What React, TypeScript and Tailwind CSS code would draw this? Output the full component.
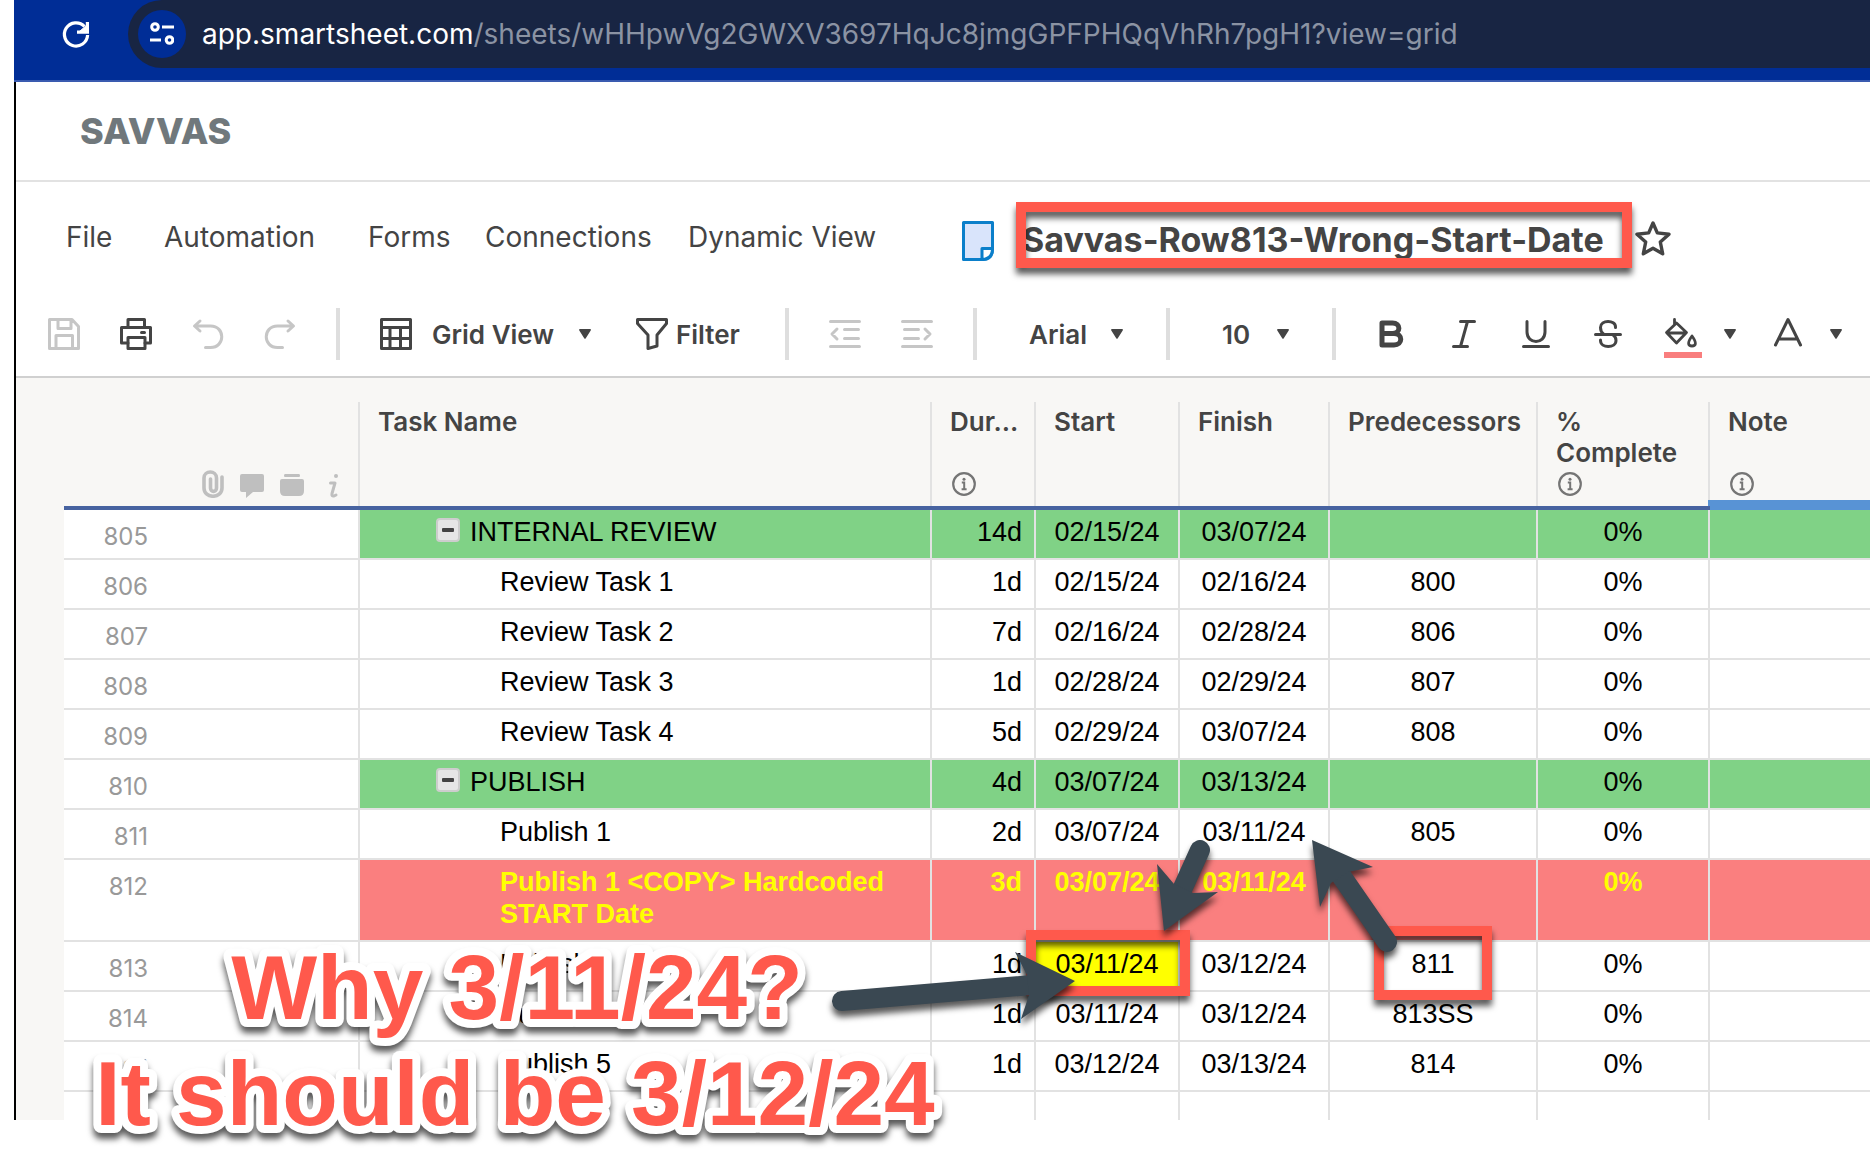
import type { ReactNode } from "react";

interface Row {
  id: number;
  task: string;
  duration: string;
  start: string;
  finish: string;
  predecessors: string;
  complete: string;
  kind?: "parent" | "alert";
}

const rows: Row[] = [
  { id: 805, task: "INTERNAL REVIEW", duration: "14d", start: "02/15/24", finish: "03/07/24", predecessors: "", complete: "0%", kind: "parent" },
  { id: 806, task: "Review Task 1", duration: "1d", start: "02/15/24", finish: "02/16/24", predecessors: "800", complete: "0%" },
  { id: 807, task: "Review Task 2", duration: "7d", start: "02/16/24", finish: "02/28/24", predecessors: "806", complete: "0%" },
  { id: 808, task: "Review Task 3", duration: "1d", start: "02/28/24", finish: "02/29/24", predecessors: "807", complete: "0%" },
  { id: 809, task: "Review Task 4", duration: "5d", start: "02/29/24", finish: "03/07/24", predecessors: "808", complete: "0%" },
  { id: 810, task: "PUBLISH", duration: "4d", start: "03/07/24", finish: "03/13/24", predecessors: "", complete: "0%", kind: "parent" },
  { id: 811, task: "Publish 1", duration: "2d", start: "03/07/24", finish: "03/11/24", predecessors: "805", complete: "0%" },
  { id: 812, task: "Publish 1 <COPY> Hardcoded START Date", duration: "3d", start: "03/07/24", finish: "03/11/24", predecessors: "", complete: "0%", kind: "alert" },
  { id: 813, task: "Publish 3", duration: "1d", start: "03/11/24", finish: "03/12/24", predecessors: "811", complete: "0%" },
  { id: 814, task: "Publish 4", duration: "1d", start: "03/11/24", finish: "03/12/24", predecessors: "813SS", complete: "0%" },
  { id: 815, task: "Publish 5", duration: "1d", start: "03/12/24", finish: "03/13/24", predecessors: "814", complete: "0%" },
];

const columns = [
  { title: "Task Name", info: false },
  { title: "Dur...", info: true },
  { title: "Start", info: false },
  { title: "Finish", info: false },
  { title: "Predecessors", info: false },
  { title: "% Complete", info: true },
  { title: "Note", info: true },
];

const menu = [
  { label: "File", width: "w-[98px]" },
  { label: "Automation", width: "w-[204px]" },
  { label: "Forms", width: "w-[117px]" },
  { label: "Connections", width: "w-[203px]" },
  { label: "Dynamic View", width: "w-[274px]" },
];

const Icon = ({ children, className = "" }: { children: ReactNode; className?: string }) => (
  <svg
    viewBox="0 0 32 32"
    className={`h-8 w-8 shrink-0 overflow-visible ${className}`}
    fill="none"
    stroke="currentColor"
    strokeWidth="3"
    strokeLinejoin="round"
    strokeLinecap="round"
    aria-hidden="true"
  >
    {children}
  </svg>
);

const Caret = ({ className = "" }: { className?: string }) => (
  <svg viewBox="0 0 12 10" className={`h-[10px] w-3 shrink-0 ${className}`} fill="currentColor" aria-hidden="true">
    <path d="M1 0h10q1.500 .2 .7 1.400L6.800 9.200q-.8 1-1.600 0L.3 1.400Q-.4.200 1 0Z" />
  </svg>
);

const Separator = () => <div className="h-[52px] w-1 shrink-0 bg-[#dedede]" />;

const InfoIcon = () => (
  <svg viewBox="0 0 24 24" className="h-6 w-6" fill="none" stroke="#757575" strokeWidth="2.200" aria-hidden="true">
    <circle cx="12" cy="12" r="10.800" />
    <path d="M9.800 10.600h2.400v6.400M9.600 17.200h5" strokeWidth="2" />
    <circle cx="12" cy="7.300" r="1.500" fill="#757575" stroke="none" />
  </svg>
);

const Highlight = ({ className }: { className: string }) => (
  <div
    className={`pointer-events-none absolute z-10 border-10 border-[#ff594c] drop-shadow-[0_6px_3px_rgba(0,0,0,0.65)] ${className}`}
  />
);

const BrowserBar = () => (
  <div className="ml-[14px] flex h-[82px] items-start border-b-2 border-[#3a5bb0] bg-[#002d96]">
    <button aria-label="Reload" className="mt-[18px] ml-[46px] h-8 w-8 text-white">
      <Icon>
        <path d="M24.500 8.500A11.600 11.600 0 1 0 27.600 17" strokeLinecap="butt" strokeWidth="3.200" />
        <path d="M27.400 4v10.200H17" strokeLinecap="butt" strokeLinejoin="miter" strokeWidth="3.200" />
        <path d="M20 13l7-6v6z" fill="currentColor" strokeWidth="1" />
      </Icon>
    </button>
    <div className="ml-9 flex h-[68px] min-w-0 flex-1 items-center rounded-l-full bg-[#182543] pl-[10px]">
      <button aria-label="Site information" className="flex h-12 w-12 shrink-0 items-center justify-center rounded-full bg-[#002d96] text-white">
        <svg viewBox="0 0 24 24" className="h-6 w-6" fill="none" stroke="currentColor" strokeWidth="3" aria-hidden="true">
          <circle cx="5" cy="5" r="3.300" />
          <path d="M12 5h12M0 18h11" />
          <circle cx="19.500" cy="18" r="3.300" />
        </svg>
      </button>
      <div className="ml-4 truncate font-['Inter',sans-serif] text-[28px] text-[#8b93a3]">
        <span className="text-white">app.smartsheet.com</span>/sheets/wHHpwVg2GWXV3697HqJc8jmgGPFPHQqVhRh7pgH1?view=grid
      </div>
    </div>
  </div>
);

const MenuBar = () => (
  <nav className="flex h-[110px] items-center pl-[50px]">
    {menu.map((item) => (
      <button key={item.label} className={`shrink-0 text-left text-[28px] whitespace-nowrap ${item.width}`}>
        {item.label}
      </button>
    ))}
    <svg viewBox="0 0 32 40" className="mt-2 h-10 w-8 shrink-0" stroke="#0b7fca" strokeWidth="3" strokeLinejoin="round" aria-hidden="true">
      <path d="M1.500 1.500h29V28q0 10-9 10.500H1.500Z" fill="#d9e4fb" />
      <path d="M30.500 27.500H20V38.500Q30.500 38 30.500 27.500Z" fill="#fff" />
    </svg>
    <div className="relative ml-7 flex h-[70px] w-[610px] shrink-0 items-center pt-1">
      <h1 className="text-[34px] font-bold whitespace-nowrap">Savvas-Row813-Wrong-Start-Date</h1>
      <Highlight className="top-0 -left-[6px] h-[66px] w-[616px]" />
    </div>
    <button aria-label="Add to favorites" className="mt-[2px] ml-[3px] h-9 w-9 shrink-0">
      <svg viewBox="0 0 36 36" className="h-9 w-9" fill="none" stroke="currentColor" strokeWidth="3.400" strokeLinejoin="round" aria-hidden="true">
        <path d="M18 3l4.300 9.900 11.700 1.300-8.700 7.800 2.400 11.800L18 28.200 8.300 33.800 10.700 22 2 14.200l11.700-1.300Z" />
      </svg>
    </button>
  </nav>
);

const Toolbar = () => (
  <div className="flex h-[86px] items-center gap-10 border-b-2 border-[#d0d0d0] pl-8 text-[26px] font-semibold">
    <button aria-label="Save" className="text-[#c6c6c6]">
      <Icon>
        <path d="M1.500 1.500h22.500l6.500 7v22h-29ZM10 1.500v9h13v-9M8 30.500v-13h16.500v13" />
      </Icon>
    </button>
    <button aria-label="Print">
      <Icon>
        <path d="M8 9.500v-8h16.500v8M8 25H1.500V9.500h29V25H25" />
        <path d="M8 19.500h17v11H8ZM21.500 14.500h3" />
      </Icon>
    </button>
    <button aria-label="Undo" className="text-[#c6c6c6]">
      <Icon>
        <path d="M8 3L2.500 8 8 13M3 8h15.500c15 0 15 21.500 0 21.500h-5" />
      </Icon>
    </button>
    <button aria-label="Redo" className="text-[#c6c6c6]">
      <Icon>
        <path d="M24 3l5.500 5L24 13M29 8H13.500c-15 0-15 21.500 0 21.500h5" />
      </Icon>
    </button>
    <Separator />
    <button className="flex w-[216px] shrink-0 items-center whitespace-nowrap">
      <Icon>
        <path d="M1.500 1.500h29v29h-29ZM1.500 9.500h29M1.500 20.500h29M10 9.500v21M20.500 9.500v21" />
      </Icon>
      <span className="ml-5 w-[147px] text-left">Grid View</span>
      <Caret />
    </button>
    <button className="flex w-[109px] shrink-0 items-center gap-2">
      <Icon>
        <path d="M1.500 1.500h29v4L21 17v11l-9 2.500V17L1.500 5.500Z" />
      </Icon>
      Filter
    </button>
    <Separator />
    <button aria-label="Outdent" className="text-[#c6c6c6]">
      <Icon>
        <path d="M1.500 3.500h29M15.500 11.500h14M15.500 20.500h14M1.500 28.500h29M8 11l-5 5 5 5" />
      </Icon>
    </button>
    <button aria-label="Indent" className="text-[#c6c6c6]">
      <Icon>
        <path d="M1.500 3.500h29M3.500 11.500h14M3.500 20.500h14M1.500 28.500h29M24 11l5 5-5 5" />
      </Icon>
    </button>
    <Separator />
    <div className="relative flex w-[109px] shrink-0 items-center">
      <select aria-label="Font" className="w-full appearance-none bg-transparent pl-3">
        <option>Arial</option>
      </select>
      <Caret className="pointer-events-none absolute right-[3px]" />
    </div>
    <Separator />
    <div className="relative flex w-[82px] shrink-0 items-center">
      <select aria-label="Font size" className="w-full appearance-none bg-transparent pl-3">
        <option>10</option>
      </select>
      <Caret className="pointer-events-none absolute right-[3px]" />
    </div>
    <Separator />
    <button aria-label="Bold">
      <Icon>
        <path d="M6 5h10.500c8.500 0 8.500 10.500 0 10.500H6ZM6 15.500h12c9 0 9 11.500 0 11.500H6Z" strokeWidth="5" />
      </Icon>
    </button>
    <button aria-label="Italic">
      <Icon>
        <path d="M12.500 3.500H26.500M5.500 28.500H19.500M19.500 3.500l-7 25" />
      </Icon>
    </button>
    <button aria-label="Underline">
      <Icon>
        <path d="M7 3.500V14c0 12.500 18 12.500 18 0V3.500M3.500 28.500h25" />
      </Icon>
    </button>
    <button aria-label="Strikethrough">
      <Icon>
        <path d="M23.500 9.500V9C23.500 1.500 8.500 1.500 8.500 9.500c0 4 1 5 3 6.500M21 17c2.500 1.400 3 3 3 5.500 0 8-15.500 8-15.500 0V22M3.500 16.500h25" />
      </Icon>
    </button>
    <div className="flex items-center gap-9">
      <button aria-label="Fill color" className="relative flex w-[72px] items-center justify-between">
        <Icon>
          <path d="M10.500 1.500v4.500M12.500 5L22.500 14.500 12.500 25 2.500 14.500ZM3.500 15h18" strokeWidth="2.800" />
          <path d="M28 18c5.500 7.500 3.500 10 0 10s-5.500-2.500 0-10Z" strokeWidth="2.800" />
        </Icon>
        <Caret />
        <span className="absolute top-[34px] left-0 h-[6px] w-[38px] bg-[#f97e7e]" />
      </button>
      <button aria-label="Text color" className="flex w-[70px] items-center justify-between">
        <Icon>
          <path d="M3.500 27L16 1.500 28.500 27M7 21h18" />
        </Icon>
        <Caret />
      </button>
    </div>
  </div>
);

const RowIcons = () => (
  <div className="flex h-[104px] items-end justify-end gap-4 pr-4 pb-2 text-[#bfbfbf]">
    <svg viewBox="0 0 22 28" className="h-7 w-[22px]" fill="none" stroke="currentColor" strokeWidth="3.600" strokeLinecap="round" aria-hidden="true">
      <path d="M20 7v11c0 11-18 11-18 0V8c0-8 12.500-8 12.500 0v10c0 4.500-6 4.500-6 0V9" />
    </svg>
    <svg viewBox="0 0 24 24" className="h-6 w-6" fill="currentColor" aria-hidden="true">
      <path d="M2 0h20q2 0 2 2v14q0 2-2 2h-9l-7 6v-6H2q-2 0-2-2V2Q0 0 2 0Z" />
    </svg>
    <svg viewBox="0 0 24 24" className="h-6 w-6" fill="currentColor" aria-hidden="true">
      <path d="M5 0h14q1 0 1 1.500T19 3H5Q4 3 4 1.500T5 0ZM2 5h20q2 0 2 2v10q0 5-5 5H5q-5 0-5-5V7q0-2 2-2Z" />
    </svg>
    <svg viewBox="0 0 24 24" className="h-6 w-6" fill="none" stroke="currentColor" strokeWidth="3" aria-hidden="true">
      <circle cx="16" cy="2" r="2" fill="currentColor" stroke="none" />
      <path d="M10.500 9h4.500l-3 10.500q-.7 3 2 2.500l2-1" strokeLinecap="round" strokeLinejoin="round" />
    </svg>
  </div>
);

const cell = "border-r-2 border-b-2 border-[#e2e2e2] pt-[6px] pb-[10px] align-top";

const SheetRow = ({ row }: { row: Row }) => {
  const parent = row.kind === "parent";
  const tone = parent ? "bg-[#80d286]" : row.kind === "alert" ? "bg-[#fa7f7f] font-bold text-[#ffff00]" : "bg-white";
  const flagged = row.id === 813;
  return (
    <tr className="h-[50px]">
      <th scope="row" className="border-r-2 border-b-2 border-[#e2e2e2] bg-white pt-[11px] pr-[210px] text-right align-top font-['Inter',sans-serif] text-[24px] font-normal text-[#999]">
        {row.id}
      </th>
      <td className={`${cell} ${tone}`}>
        {parent ? (
          <div className="flex items-start pl-[76px]">
            <button aria-label={`Collapse ${row.task}`} className="mt-[2px] mr-[10px] flex h-6 w-6 items-center justify-center rounded-[4px] border-2 border-[#cdcdcd] bg-[#e6e6e6]">
              <span className="h-[4px] w-3 rounded-[1px] bg-[#444]" />
            </button>
            {row.task}
          </div>
        ) : (
          <div className="pr-8 pl-[140px]">{row.task}</div>
        )}
      </td>
      <td className={`${cell} ${tone} pr-3 text-right`}>{row.duration}</td>
      <td className={`${cell} ${flagged ? "bg-[#ffff00]" : tone} relative text-center`}>
        {row.start}
        {flagged && <Highlight className="-top-3 -left-[10px] h-[66px] w-[164px]" />}
      </td>
      <td className={`${cell} ${tone} text-center`}>{row.finish}</td>
      <td className={`${cell} ${tone} relative text-center`}>
        {row.predecessors}
        {flagged && <Highlight className="-top-4 left-11 h-[74px] w-[118px]" />}
      </td>
      <td className={`${cell} ${tone} text-center`}>{row.complete}</td>
      <td className={`border-b-2 border-[#e2e2e2] ${tone}`} />
    </tr>
  );
};

const Sheet = () => (
  <div className="bg-[#f8f7f5] pt-6 pl-12">
    <table className="w-full table-fixed border-separate border-spacing-0 font-['Liberation_Sans',Arial,sans-serif] text-[27px] leading-8 text-black">
      <colgroup>
        <col className="w-[296px]" />
        <col className="w-[572px]" />
        <col className="w-[104px]" />
        <col className="w-[144px]" />
        <col className="w-[150px]" />
        <col className="w-[208px]" />
        <col className="w-[172px]" />
        <col />
      </colgroup>
      <thead className="font-['Inter',sans-serif] text-[26px] leading-[31px] text-[#444]">
        <tr>
          <th className="relative border-b-4 border-[#4763a0] p-0">
            <RowIcons />
            <span className="absolute top-0 right-0 h-[104px] w-[2px] bg-[#e2e2e2]" />
          </th>
          {columns.map((column) => (
            <th
              key={column.title}
              className={`relative border-b-4 p-0 text-left align-top font-semibold ${column.title === "Note" ? "border-[#5893d5]" : "border-[#4763a0]"}`}
            >
              <div className={`h-[70px] pt-1 pl-[18px] ${column.title === "% Complete" ? "pr-5" : ""}`}>{column.title}</div>
              <div className="h-[34px] pl-5">{column.info && <InfoIcon />}</div>
              {column.title === "Note" ? (
                <span className="absolute right-0 bottom-0 -left-[2px] h-[6px] bg-[#5893d5]" />
              ) : (
                <span className="absolute top-0 right-0 h-[104px] w-[2px] bg-[#e2e2e2]" />
              )}
            </th>
          ))}
        </tr>
      </thead>
      <tbody>
        {rows.map((row) => (
          <SheetRow key={row.id} row={row} />
        ))}
        <tr className="h-7">
          {columns.map((column) => (
            <td key={column.title} className="border-r-2 border-[#e2e2e2] bg-white" />
          ))}
          <td className="bg-white" />
        </tr>
      </tbody>
    </table>
  </div>
);

// Hand-placed notes and arrows that float over the sheet
const Annotations = () => (
  <svg
    viewBox="0 0 1440 1162"
    className="pointer-events-none absolute top-0 left-0 z-20 h-[1162px] w-[1440px] drop-shadow-[0_6px_3px_rgba(0,0,0,0.65)]"
    role="img"
    aria-label="Why 3/11/24? It should be 3/12/24"
  >
    <g
      className="font-['Liberation_Sans',Arial,sans-serif] text-[91px] font-bold"
      fill="#ff594c"
      stroke="#fff"
      strokeWidth="16"
      strokeLinejoin="round"
      paintOrder="stroke"
      textAnchor="middle"
    >
      <text x="517" y="1019">Why 3/11/24?</text>
      <text x="515" y="1125">It should be 3/12/24</text>
    </g>
    <g fill="#3a4852" stroke="#3a4852" strokeLinecap="round">
      <path d="M842 1001L1032 985" strokeWidth="20" />
      <path d="M1075 981L1015 952L1027 975L1029 995L1021 1019Z" stroke="none" />
      <path d="M1200 850L1181 892" strokeWidth="20" />
      <path d="M1164 931L1157 864L1174 884L1193 893L1218 892Z" stroke="none" />
      <path d="M1387 942L1340 874" strokeWidth="20" />
      <path d="M1312 840L1373 867L1348 872L1331 883L1320 907Z" stroke="none" />
    </g>
  </svg>
);

const App = () => {
  return (
    <div className="relative min-h-screen overflow-hidden bg-white">
      <BrowserBar />
      <main className="ml-[14px] border-l-2 border-black font-['Inter',sans-serif] text-[#444]">
        <header className="flex h-[100px] items-center border-b-2 border-[#e2e2e2] pl-16">
          <span className="text-[36px] font-extrabold text-[#70787c]">SAVVAS</span>
        </header>
        <MenuBar />
        <Toolbar />
        <Sheet />
      </main>
      <Annotations />
    </div>
  );
};

export default App;
